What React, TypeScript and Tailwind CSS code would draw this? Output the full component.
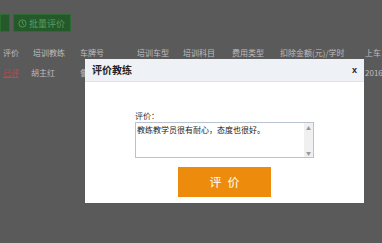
import React from "react";

const cols = ["评价", "培训教练", "车牌号", "培训车型", "培训科目", "费用类型", "扣除金额(元)/学时", "上车"];

export default function App() {
  return (
    <div
      className="relative w-[382px] h-[243px] overflow-hidden bg-[#5b5a5b]"
      style={{ fontFamily: '"Noto Sans CJK SC", "Noto Sans", sans-serif' }}
    >
      <div className="flex gap-[3px] pt-[14px] h-[32px]">
        <div className="w-[10px] h-[18px] bg-[#245a2a] border border-[#2e6b33]" />
        <div className="flex items-center gap-[2px] w-[58px] h-[18px] bg-[#245a2a] border border-[#2e6b33] pl-[4px] text-[9px] text-[#5a9a60] leading-none">
          <svg width="9" height="9" viewBox="0 0 10 10" fill="none" stroke="#5a9a60" strokeWidth="1">
            <circle cx="5" cy="5" r="4" />
            <path d="M5 2.5V5.2L6.6 6.3" />
          </svg>
          <span>批量评价</span>
        </div>
      </div>
      <div className="grid grid-cols-[30px_47px_57px_46px_49px_48px_85px_40px] pl-[3px] mt-[15px] h-[12px] items-center text-[8px] leading-none text-[#bdbcbd]">
        {cols.map((c) => (
          <div key={c} className="whitespace-nowrap">{c}</div>
        ))}
      </div>
      <div className="grid grid-cols-[28px_49px_57px_46px_49px_48px_85px_40px] pl-[3px] mt-[8px] h-[12px] items-center text-[8px] leading-none text-[#bdbcbd]">
        <div className="text-[#c04848] underline">已评</div>
        <div>胡主红</div>
        <div>鲁</div>
        <div />
        <div />
        <div />
        <div />
        <div>2016</div>
      </div>

      <div className="absolute left-[85px] top-[59px] w-[279px] h-[144px] bg-white flex flex-col">
        <div className="h-[23px] bg-[#eef1f6] border-b border-[#dde3ee] flex items-center justify-between pl-[7px] pr-[7px]">
          <span className="text-[10px] font-bold text-[#222] leading-none">评价教练</span>
          <span className="text-[9px] font-bold text-[#222] leading-none" style={{ fontFamily: '"Liberation Sans", sans-serif' }}>x</span>
        </div>
        <div className="flex flex-col pl-[50px] pt-[29px]">
          <div className="text-[8px] leading-[10px] text-[#333]">评价：</div>
          <div className="mt-[1px] w-[179px] h-[36px] border border-[#b9c2cf] flex">
            <div className="flex-1 text-[8px] leading-[10px] text-[#222] pl-[1px] pt-[2px]">
              教练教学员很有耐心，态度也很好。
            </div>
            <div className="w-[9px] bg-[#f0f0f0] flex flex-col items-center justify-between py-[2px]">
              <span className="text-[5px] leading-none text-[#999]">▲</span>
              <span className="text-[5px] leading-none text-[#999]">▼</span>
            </div>
          </div>
          <div className="mt-[9px] ml-[43px] w-[93px] h-[30px] bg-[#ed8b0d] flex items-center justify-center pl-[6px] text-white text-[12px] tracking-[6px] leading-none">
            评价
          </div>
        </div>
      </div>
    </div>
  );
}
